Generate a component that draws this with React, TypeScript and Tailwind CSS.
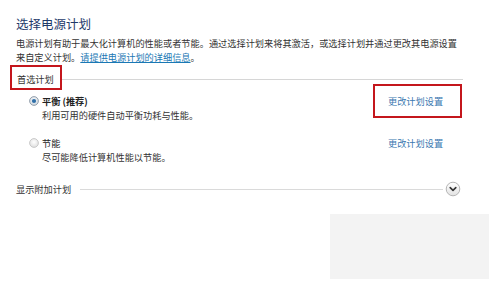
import React from 'react';

const font = { fontFamily: '"Noto Sans CJK SC", "Noto Sans", sans-serif' };

function Radio({ checked }: { checked?: boolean }) {
  return (
    <svg width="10" height="10" viewBox="0 0 10 10" className="shrink-0">
      <defs>
        <radialGradient id={checked ? 'rOn' : 'rOff'} cx="50%" cy="40%" r="60%">
          <stop offset="0%" stopColor="#ffffff" />
          <stop offset="100%" stopColor={checked ? '#c9d3dc' : '#dedede'} />
        </radialGradient>
      </defs>
      <circle cx="5" cy="5" r="4.4" fill={`url(#${checked ? 'rOn' : 'rOff'})`} stroke={checked ? '#8c99a6' : '#c4c4c4'} strokeWidth="0.9" />
      {checked && <circle cx="5" cy="5" r="2.1" fill="#2f6fa8" />}
    </svg>
  );
}

function Chevron() {
  return (
    <svg width="16" height="16" viewBox="0 0 16 16" className="shrink-0">
      <defs>
        <linearGradient id="chev" x1="0" y1="0" x2="0" y2="1">
          <stop offset="0%" stopColor="#ffffff" />
          <stop offset="100%" stopColor="#e2e2e2" />
        </linearGradient>
      </defs>
      <circle cx="8" cy="8" r="6.8" fill="url(#chev)" stroke="#b5b5b5" strokeWidth="1" />
      <path d="M5.2 6.6 L8 9.4 L10.8 6.6" fill="none" stroke="#333" strokeWidth="1.6" strokeLinecap="round" strokeLinejoin="round" />
    </svg>
  );
}

export default function App() {
  return (
    <div className="w-[500px] h-[281px] bg-white overflow-hidden pl-4 text-[#333]" style={font}>
      <h1 className="pt-4 text-[12.5px] leading-4 text-[#1e3a6a]">选择电源计划</h1>

      <p className="mt-1 text-[9.2px] leading-[14px] whitespace-nowrap">
        电源计划有助于最大化计算机的性能或者节能。通过选择计划来将其激活，或选择计划并通过更改其电源设置
        <br />
        来自定义计划。<span className="text-[#1a78b4] underline">请提供电源计划的详细信息</span>。
      </p>

      <div className="mt-px flex items-center h-[25px] -ml-[6px] mr-[37px]">
        <div className="h-[25px] border-2 border-[#c4161c] pl-[5px] pr-[6px] pt-[2px] flex items-center text-[9.2px] leading-[14px]">
          首选计划
        </div>
        <div className="flex-1 h-px bg-[#d6d6d6] mt-[3px]" />
      </div>

      <div className="mt-1 ml-[13px] flex flex-col text-[9.2px]">
        <div className="flex">
          <div className="w-[359px]">
            <div className="flex items-center gap-[3px] leading-[14px] font-bold text-[#222]">
              <Radio checked />
              <span>平衡 (推荐)</span>
            </div>
            <div className="pl-[13px] leading-[15px]">利用可用的硬件自动平衡功耗与性能。</div>
          </div>
          <div className="leading-[14px]">
            <span className="relative text-[#3a78b0]">
              更改计划设置
              <span className="absolute -left-[15px] -right-[19px] -top-[10px] -bottom-[10px] border-2 border-[#c4161c]" />
            </span>
          </div>
        </div>

        <div className="flex mt-[13px]">
          <div className="w-[359px]">
            <div className="flex items-center gap-[3px] leading-[14px] text-[#222]">
              <Radio />
              <span>节能</span>
            </div>
            <div className="pl-[13px] leading-[15px]">尽可能降低计算机性能以节能。</div>
          </div>
          <div className="leading-[14px] text-[#3a78b0]">更改计划设置</div>
        </div>
      </div>

      <div className="mt-[16px] flex items-center mr-[39px] text-[9.2px] leading-[14px]">
        <span>显示附加计划</span>
        <div className="flex-1 h-px bg-[#dadada] ml-[9px] mr-[2px]" />
        <Chevron />
      </div>

      <div className="mt-[17px] ml-[314px] w-[159px] h-[65px] bg-[#f3f3f3]" />
    </div>
  );
}
